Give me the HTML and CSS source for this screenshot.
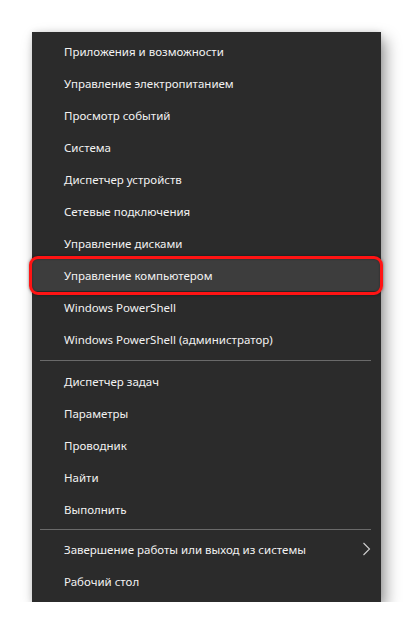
FILE: index.html
```html
<!DOCTYPE html>
<html lang="ru">
<head>
<meta charset="utf-8">
<link rel="stylesheet" href="styles.css">
</head>
<body>
<div class="menu">
  <div class="item">Приложения и возможности</div>
  <div class="item">Управление электропитанием</div>
  <div class="item">Просмотр событий</div>
  <div class="item">Система</div>
  <div class="item">Диспетчер устройств</div>
  <div class="item">Сетевые подключения</div>
  <div class="item">Управление дисками</div>
  <div class="item active">Управление компьютером</div>
  <div class="item">Windows PowerShell</div>
  <div class="item">Windows PowerShell (администратор)</div>
  <div class="sep sep-a"></div>
  <div class="item">Диспетчер задач</div>
  <div class="item">Параметры</div>
  <div class="item">Проводник</div>
  <div class="item">Найти</div>
  <div class="item">Выполнить</div>
  <div class="sep sep-b"></div>
  <div class="item sub"><span>Завершение работы или выход из системы</span>
    <svg class="chev" width="9" height="14" viewBox="0 0 9 14"><polyline points="1.5,1 7.5,7 1.5,13" fill="none" stroke="#d0d0d0" stroke-width="1.1"/></svg>
  </div>
  <div class="item">Рабочий стол</div>
</div>
</body>
</html>
```
FILE: styles.css
```css
html, body {
  margin: 0;
  padding: 0;
  background: #ffffff;
}
body {
  font-family: "Noto Sans", "Open Sans", sans-serif;
}
.menu {
  margin: 32px 0 0 32px;
  width: 349px;
  height: 570px;
  box-sizing: border-box;
  padding: 3px 0 5px 0;
  background: #2b2b2b;
  box-shadow: 5px 7px 14px rgba(0, 0, 0, 0.38), 0 0 6px rgba(0, 0, 0, 0.12);
  display: flex;
  flex-direction: column;
}
.item {
  height: 32px;
  display: flex;
  align-items: center;
  padding-left: 32px;
  padding-right: 10px;
  color: #f2f2f2;
  font-size: 11.5px;
  white-space: nowrap;
  position: relative;
}
.item.sub {
  justify-content: space-between;
}
.chev {
  display: block;
}
.item.active {
  background: #3d3d3d;
}
.item.active::after {
  content: "";
  position: absolute;
  left: -3px;
  right: -2px;
  top: -3px;
  bottom: -4px;
  border: 3px solid #ff1414;
  border-radius: 9px;
  box-shadow: 0 0 3px rgba(0, 0, 0, 0.45), inset 0 0 2px rgba(0, 0, 0, 0.4);
}
.sep {
  display: flex;
  align-items: center;
  padding: 0 10px 0 8px;
}
.sep::before {
  content: "";
  flex: 1;
  height: 1px;
  background: #6a6a6a;
}
.sep-a {
  height: 10px;
}
.sep-b {
  height: 8px;
}
```
